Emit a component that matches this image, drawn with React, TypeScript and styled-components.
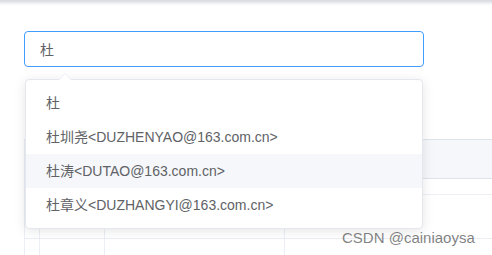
import React from "react";
import styled, { createGlobalStyle } from "styled-components";

const Global = createGlobalStyle`
  html, body { margin: 0; padding: 0; background: #fff; }
  body {
    font-family: "Liberation Sans", Arial, "Noto Sans CJK SC", sans-serif;
    font-size: 14px;
    color: #606266;
    overflow: hidden;
  }
`;

const Page = styled.div`
  position: relative;
  width: 492px;
  height: 255px;
  overflow: hidden;
`;

const TopShade = styled.div`
  height: 6px;
  background: linear-gradient(#d6d9df 0, #e3e5ea 2px, #f6f7f9 4px, #fff 6px);
`;

const Content = styled.div`
  padding: 25px 0 0 24px;
`;

const InputBox = styled.div`
  box-sizing: border-box;
  width: 400px;
  height: 36px;
  border: 1px solid #409eff;
  border-radius: 4px;
  padding: 0 15px;
  display: flex;
  align-items: center;
  color: #606266;
  font-size: 14px;
`;

const Table = styled.div`
  margin-top: 72px;
  width: 600px;
  border-left: 1px solid #ebeef5;
  border-top: 1px solid #dfe4ea;
`;

const HeaderRow = styled.div`
  height: 38px;
  background: #f5f7fa;
  border-bottom: 1px solid #dfe4ea;
`;

const Row = styled.div<{ $h: number }>`
  display: grid;
  grid-template-columns: 15px 65px 180px 1fr;
  height: ${(p) => p.$h}px;
  border-bottom: 1px solid #ebeef5;
`;

const Cell = styled.div`
  border-right: 1px solid #ebeef5;
  &:last-child { border-right: none; }
`;

const Dropdown = styled.div`
  position: absolute;
  left: 25px;
  top: 79px;
  width: 398px;
  box-sizing: border-box;
  background: #fff;
  border: 1px solid #e4e7ed;
  border-radius: 4px;
  box-shadow: 0 2px 12px 0 rgba(0, 0, 0, 0.1);
  padding: 6px 0;
`;

const Arrow = styled.div`
  position: absolute;
  top: -13px;
  left: 33px;
  width: 0;
  height: 0;
  border: 6px solid transparent;
  border-bottom-color: #ebeef5;
  &::after {
    content: "";
    position: absolute;
    left: -6px;
    top: -5px;
    border: 6px solid transparent;
    border-bottom-color: #fff;
  }
`;

const Item = styled.div<{ $active?: boolean }>`
  height: 34px;
  line-height: 34px;
  padding: 0 20px;
  font-size: 14px;
  color: #606266;
  white-space: nowrap;
  background: ${(p) => (p.$active ? "#f5f7fa" : "#fff")};
`;

const Watermark = styled.div`
  position: absolute;
  left: 342px;
  top: 228px;
  font-size: 15px;
  line-height: 20px;
  color: rgba(80, 80, 80, 0.72);
  white-space: nowrap;
`;

const items = [
  "杜",
  "杜圳尧<DUZHENYAO@163.com.cn>",
  "杜涛<DUTAO@163.com.cn>",
  "杜章义<DUZHANGYI@163.com.cn>",
];

export default function App() {
  return (
    <Page>
      <Global />
      <TopShade />
      <Content>
        <InputBox>杜</InputBox>
        <Table>
          <HeaderRow />
          <Row $h={15}>
            <Cell />
            <Cell />
            <Cell />
            <Cell />
          </Row>
          <Row $h={43}>
            <Cell />
            <Cell />
            <Cell />
            <Cell />
          </Row>
          <Row $h={43}>
            <Cell />
            <Cell />
            <Cell />
            <Cell />
          </Row>
        </Table>
      </Content>
      <Dropdown>
        <Arrow />
        {items.map((t, i) => (
          <Item key={i} $active={i === 2}>
            {t}
          </Item>
        ))}
      </Dropdown>
      <Watermark>CSDN @cainiaoysa</Watermark>
    </Page>
  );
}
